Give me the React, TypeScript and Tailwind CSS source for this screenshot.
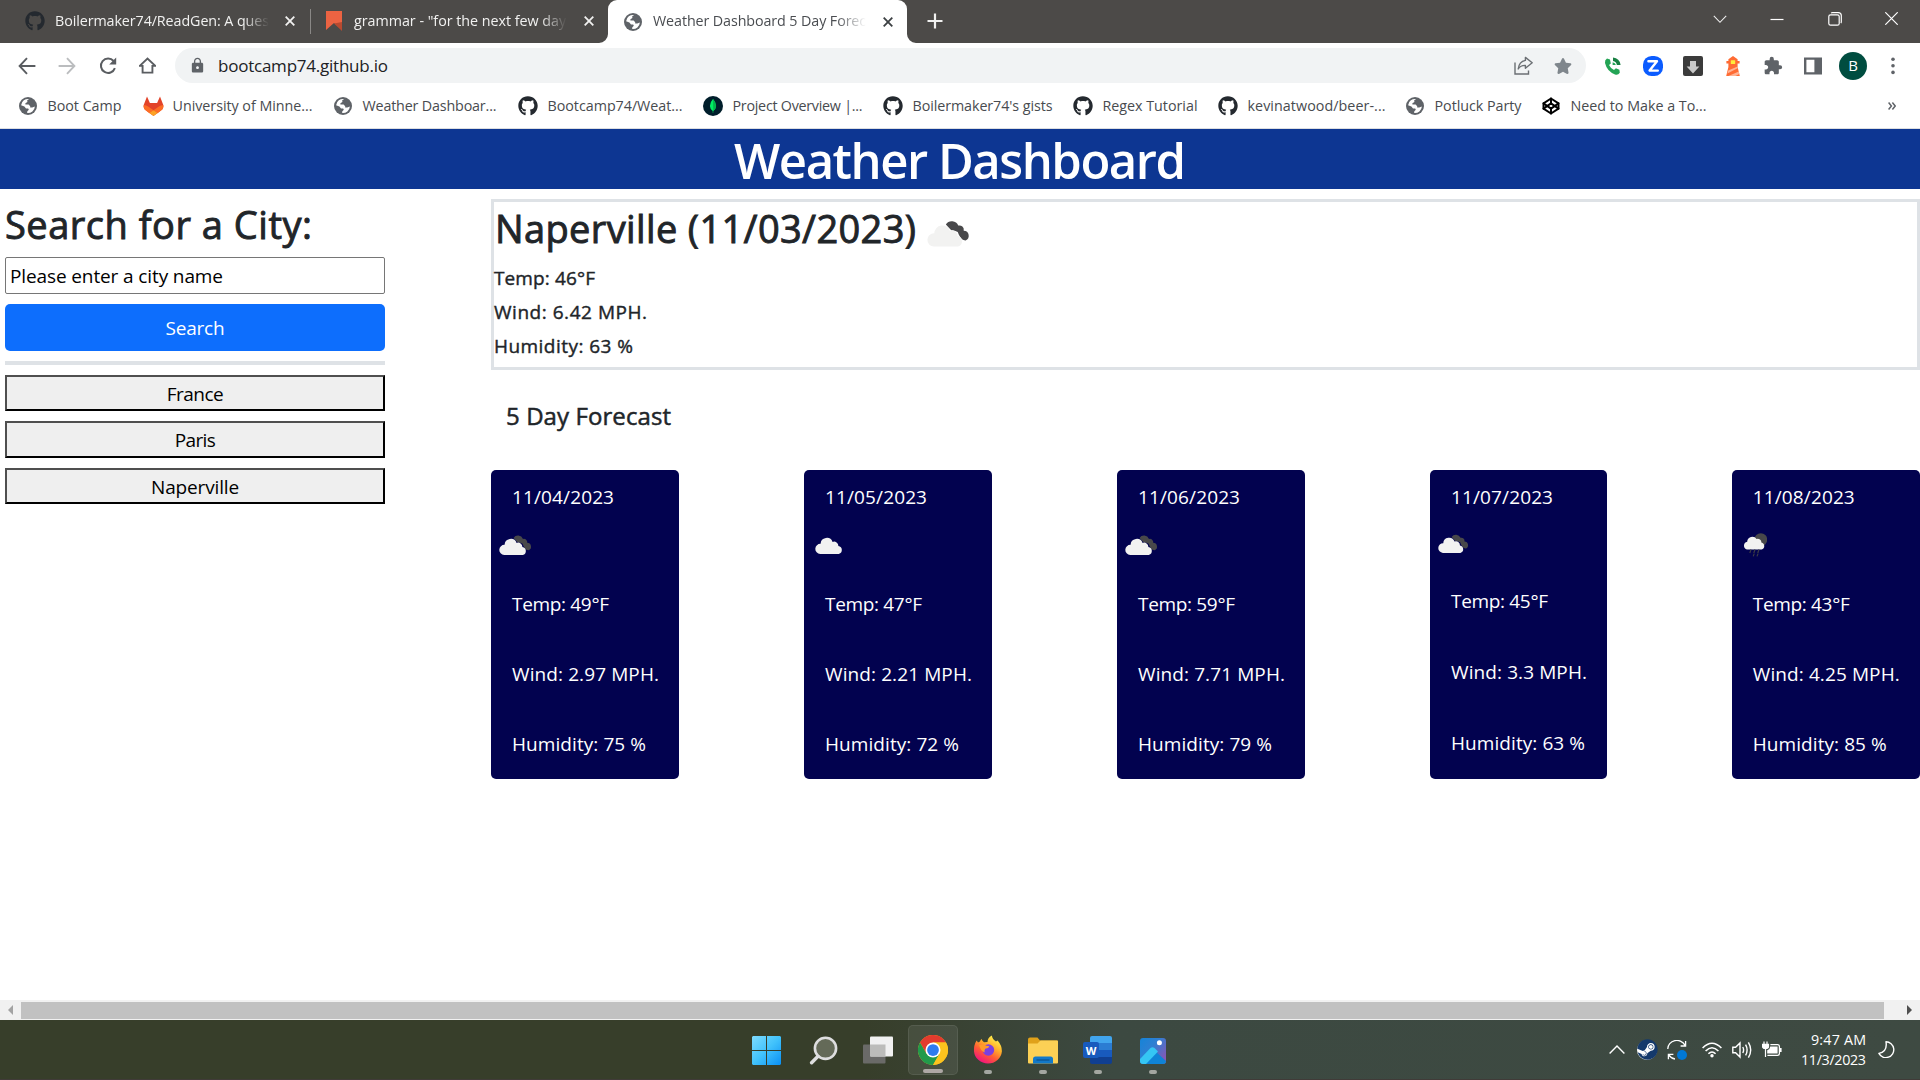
import React, { useLayoutEffect, useRef, useState } from "react";
import { FaGithub, FaSteam, FaStar } from "react-icons/fa";
import { MdExtension, MdLock } from "react-icons/md";
import { Codepen } from "lucide-react";

/** Single line of text whose tracking is adjusted so that it spans `w` pixels. */
function Fit({ w, className = "", children }: { w: number; className?: string; children: string }) {
  const ref = useRef<HTMLSpanElement>(null);
  const [spacing, setSpacing] = useState(0);
  useLayoutEffect(() => {
    const el = ref.current;
    if (!el) return;
    el.style.letterSpacing = "0px";
    const natural = el.getBoundingClientRect().width;
    const next = (w - natural) / Math.max(1, children.length - 1);
    el.style.letterSpacing = `${next}px`;
    setSpacing(next);
  }, [w, children]);
  return (
    <span className={`block shrink-0 whitespace-nowrap ${className}`} style={{ width: w }}>
      <span ref={ref} className="inline-block" style={{ letterSpacing: spacing }}>
        {children}
      </span>
    </span>
  );
}

function Globe() {
  return (
    <svg className="size-[18px] shrink-0" viewBox="0 0 18 18">
      <circle cx="9" cy="9" r="9" fill="#5f6368" />
      <path
        d="M10.2 2 L8.2 3.2 L8.4 5 L6.4 6.2 L6.4 7.6 L9.6 7.6 L11.2 9.2 L11.2 10.6 L13.2 10.6 L15.9 9.6 A7 7 0 0 1 8.2 16 L8.2 14.4 L9.8 12.8 L9.2 11.6 L7 11.4 L5.4 9.6 L2.1 8.2 A7 7 0 0 1 10.2 2Z"
        fill="#fff"
      />
      <path d="M10.3 2 A7.1 7.1 0 0 1 15.9 8.6 L13.8 8.8 L12.4 7 L9.6 6.6 L9 4.4Z" fill="#5f6368" />
    </svg>
  );
}

function Gitlab() {
  return (
    <svg className="h-[20px] w-[21px] shrink-0" viewBox="0 0 21 20">
      <path d="M4 0.6 L6.9 7 H14.1 L17 0.6 L20.3 9 Q21 12.4 18 14.6 L10.5 20 L3 14.6 Q0 12.4 0.7 9Z" fill="#e24329" />
      <path d="M20.2 9 Q17 9.4 14.4 11.4 L10.5 14.3 L14.6 17.2 L18 14.6 Q21 12.4 20.2 9Z M0.8 9 Q4 9.4 6.6 11.4 L10.5 14.3 L6.4 17.2 L3 14.6 Q0 12.4 0.8 9Z" fill="#fc6d26" />
      <path d="M10.5 14.3 L14.6 17.1 L10.5 20 L6.4 17.1Z" fill="#fca326" />
    </svg>
  );
}

function Mongo() {
  return (
    <svg className="size-[20px] shrink-0" viewBox="0 0 20 20">
      <circle cx="10" cy="10" r="10" fill="#001e2b" />
      <path d="M10 3 Q13.2 6.4 13.1 10 Q12.8 13.4 10.3 15 L10.2 17 H9.8 L9.7 15 Q7.1 13.4 6.9 10 Q6.8 6.4 10 3Z" fill="#00ed64" />
      <path d="M10 3 Q13.2 6.4 13.1 10 Q12.8 13.4 10.3 15Z" fill="#00b54c" />
    </svg>
  );
}

function Close({ className }: { className: string }) {
  return (
    <svg className={`size-[10px] shrink-0 ${className}`} viewBox="0 0 10 10" stroke="currentColor" strokeWidth="1.8">
      <path d="M0.7 0.7 L9.3 9.3 M9.3 0.7 L0.7 9.3" />
    </svg>
  );
}

function TabStrip() {
  return (
    <div className="flex h-[43px] bg-[#4c4a48] text-[14.3px] leading-[40px] text-[#f1f1f0]">
      <div className="flex h-[42px] w-[310px] items-center pl-[25px]">
        <FaGithub className="mr-[10px] size-[20px] shrink-0 text-[#24292f]" />
        <div className="w-[214px] overflow-hidden [mask-image:linear-gradient(to_right,#000_88%,transparent)]">
          <Fit w={219}>Boilermaker74/ReadGen: A quest</Fit>
        </div>
        <Close className="ml-[16px]" />
      </div>
      <div className="mt-[9px] h-[25px] w-px bg-[#8a8886]" />
      <div className="flex h-[42px] w-[297px] items-center pl-[15px]">
        <svg className="mr-[12px] h-[20px] w-[16px] shrink-0" viewBox="0 0 16 20">
          <path d="M0 0H16V19L8 12L0 19Z" fill="#ec6342" />
          <path d="M8 12.5L16 11V20Z" fill="#b84a30" />
        </svg>
        <div className="w-[215px] overflow-hidden [mask-image:linear-gradient(to_right,#000_87%,transparent_99%)]">
          <Fit w={219}>grammar - "for the next few days</Fit>
        </div>
        <Close className="ml-[15px]" />
      </div>
      <div className="relative flex w-[299px] items-center rounded-t-[9px] bg-white pl-[16px] text-[#4a4d51]">
        <svg className="absolute bottom-0 -left-[9px] size-[9px]" viewBox="0 0 9 9">
          <path d="M9 0V9H0A9 9 0 0 0 9 0Z" fill="#fff" />
        </svg>
        <svg className="absolute -right-[9px] bottom-0 size-[9px]" viewBox="0 0 9 9">
          <path d="M0 0V9H9A9 9 0 0 1 0 0Z" fill="#fff" />
        </svg>
        <Globe />
        <div className="mb-[2px] ml-[10px] w-[214px] overflow-hidden [mask-image:linear-gradient(to_right,#000_86%,transparent)]">
          <Fit w={221} className="pl-px">
            Weather Dashboard 5 Day Foreca
          </Fit>
        </div>
        <Close className="ml-[17px] text-[#3c4043]" />
      </div>
      <svg className="mt-[13px] ml-[20px] size-[16px]" viewBox="0 0 16 16" stroke="#f1f1f0" strokeWidth="2.2">
        <path d="M8 0.5V15.5M0.5 8H15.5" />
      </svg>
      <div className="ml-auto flex h-[37px] items-center gap-[43.5px] pr-[22px]">
        <svg className="size-[14px]" viewBox="0 0 14 14" fill="none" stroke="#eee" strokeWidth="1.1">
          <path d="M0.8 3.8L7 10.3L13.2 3.8" />
        </svg>
        <svg className="size-[14px]" viewBox="0 0 14 14" stroke="#fff" strokeWidth="1.2">
          <path d="M0.5 7.5H13.5" />
        </svg>
        <svg className="size-[14px]" viewBox="0 0 14 14" fill="none" stroke="#fff" strokeWidth="1.2">
          <rect x="0.8" y="2.8" width="10.4" height="10.4" rx="1.8" />
          <path d="M3 1Q3.6 0.7 4.5 0.7H10.2Q13.3 0.7 13.3 3.6V9.6Q13.3 10.6 12.9 11.2" />
        </svg>
        <svg className="size-[13px]" viewBox="0 0 13 13" stroke="#fff" strokeWidth="1.2">
          <path d="M0.3 0.3L12.7 12.7M12.7 0.3L0.3 12.7" />
        </svg>
      </div>
    </div>
  );
}

function Toolbar() {
  return (
    <div className="flex h-[44px] items-center bg-white pt-px pl-[18px]">
      <svg className="size-[18px]" viewBox="0 0 18 18" fill="none" stroke="#5a5d61" strokeWidth="1.9">
        <path d="M9 1.2L1.6 9L9 16.8M1.6 9H17.4" />
      </svg>
      <svg className="ml-[22px] size-[18px]" viewBox="0 0 18 18" fill="none" stroke="#bbbdbf" strokeWidth="1.9">
        <path d="M9 1.2L16.4 9L9 16.8M16.4 9H0.6" />
      </svg>
      <svg className="ml-[23px] size-[18px]" viewBox="0 0 18 18">
        <path d="M15.9 11.2A7.2 7.2 0 1 1 14.6 4" fill="none" stroke="#5a5d61" strokeWidth="2" />
        <path d="M17.2 0.6V7.6H10.2Z" fill="#5a5d61" />
      </svg>
      <svg className="ml-[22px] size-[17px]" viewBox="0 0 18 18" fill="none" stroke="#5a5d61" strokeWidth="2">
        <path d="M0.8 9.4L9 1.6L17.2 9.4H14.2V16.6H3.8V9.4Z" />
      </svg>
      <div className="ml-[19px] flex h-[35px] w-[1411px] items-center rounded-full bg-[#f1f3f4] pr-[14px] pl-[14px]">
        <MdLock className="size-[17px] text-[#5f6368]" />
        <Fit w={170} className="ml-[12px] text-[17px] text-[#202124]">
          bootcamp74.github.io
        </Fit>
        <svg className="mr-[21px] ml-auto size-[19px]" viewBox="0 0 19 19" fill="none" stroke="#6b6f73" strokeWidth="1.4">
          <path d="M1 6.5V18H14.5V14.5" />
          <path d="M11.4 1.4L18.2 6.8L11.4 12.2V9.4Q6.6 9.2 4.2 13Q5 5.6 11.4 4.4Z" strokeLinejoin="round" />
        </svg>
        <FaStar className="size-[18px] text-[#7f868c]" />
      </div>
      <div className="ml-[17px] flex items-center gap-[20px]">
        <svg className="size-[20px]" viewBox="0 0 20 20" fill="#23a455">
          <path d="M4 2.6L7 3.6L7.8 7.4L6 9Q7.8 12.6 11 14L12.9 12.3L16.4 13.7L16.8 16.8Q15 19.4 12 18.4Q4 15.4 2 7Q1.6 3.9 4 2.6Z" />
          <path d="M10 1.6Q16.6 2.2 17.6 9H13.9Q13.3 5.6 10 5.1Z" fill="#188043" />
          <path d="M9.6 6.2Q12.3 6.6 12.9 9H9.6Z" />
        </svg>
        <svg className="size-[20px]" viewBox="0 0 20 20">
          <rect width="20" height="20" rx="8.6" fill="#0b5cff" />
          <path d="M5.4 5.2H14L6.6 14.6H14.8" fill="none" stroke="#fff" strokeWidth="2.4" strokeLinejoin="round" strokeLinecap="round" />
        </svg>
        <svg className="size-[20px]" viewBox="0 0 20 20">
          <rect width="20" height="20" rx="2" fill="#3b3b3b" />
          <path d="M7 5H13V10.5H16.4L10 17.4L3.6 10.5H7Z" fill="#c9c9c9" />
        </svg>
        <svg className="size-[20px]" viewBox="0 0 20 20">
          <path d="M10 0L14.6 3.2V5H16.6V7.6H14.6V11L16.8 20H3.2L5.4 11V7.6H3.4V5H5.4V3.2Z" fill="#ff6b33" />
          <rect x="7.8" y="4.2" width="4.4" height="3.8" rx="0.6" fill="#ffeb3b" />
          <path d="M5.2 14.4L14.6 10.4L15 12L4.4 17.4ZM5.4 20L15.8 15.6L16.3 18L12.4 20Z" fill="#ffb394" />
        </svg>
        <MdExtension className="size-[20px] text-[#5f6368]" />
        <svg className="size-[20px]" viewBox="0 0 20 20">
          <path d="M1 1.4H19V18.6H1ZM3.4 3.8V16.2H11.4V3.8Z" fill="#5f6368" fillRule="evenodd" />
        </svg>
        <div className="-ml-[4px] flex size-[28px] items-center justify-center rounded-full bg-[#004d40] text-[15px] leading-none text-white">B</div>
        <svg className="-ml-[0px] h-[18px] w-[4px] translate-x-[4px]" viewBox="0 0 4 18" fill="#5f6368">
          <circle cx="2" cy="2.2" r="1.8" />
          <circle cx="2" cy="8.8" r="1.8" />
          <circle cx="2" cy="15.4" r="1.8" />
        </svg>
      </div>
    </div>
  );
}

const cat = <FaGithub className="size-[20px] text-[#24292f]" />;
const bookmarks: { icon: React.ReactNode; label: string; w: number; cell: number }[] = [
  { icon: <Globe />, label: "Boot Camp", w: 74, cell: 125 },
  { icon: <Gitlab />, label: "University of Minne...", w: 140, cell: 190 },
  { icon: <Globe />, label: "Weather Dashboar...", w: 134, cell: 185 },
  { icon: cat, label: "Bootcamp74/Weat...", w: 135, cell: 185 },
  { icon: <Mongo />, label: "Project Overview |...", w: 130, cell: 180 },
  { icon: cat, label: "Boilermaker74's gists", w: 140, cell: 190 },
  { icon: cat, label: "Regex Tutorial", w: 95, cell: 145 },
  { icon: cat, label: "kevinatwood/beer-...", w: 138, cell: 187 },
  { icon: <Globe />, label: "Potluck Party", w: 87, cell: 136 },
  { icon: <Codepen className="size-[18px] text-black" strokeWidth={2.6} />, label: "Need to Make a To...", w: 136, cell: 200 },
];

function Bookmarks() {
  return (
    <div className="flex h-[42px] items-center border-b border-[#dcdee1] bg-white pb-[4px] pl-[17px] text-[14.3px] text-[#484b4f]">
      {bookmarks.map((b) => (
        <div key={b.label} className="flex shrink-0 items-center" style={{ width: b.cell }}>
          <span className="mr-[8.5px] flex w-[22px] justify-center">{b.icon}</span>
          <Fit w={b.w}>{b.label}</Fit>
        </div>
      ))}
      <svg className="mr-[24px] ml-auto size-[8px]" viewBox="0 0 8 8" fill="none" stroke="#5f6368" strokeWidth="1.5">
        <path d="M0.6 0.6L3.4 4L0.6 7.4M4.4 0.6L7.2 4L4.4 7.4" />
      </svg>
    </div>
  );
}

function Cloud({ kind, className }: { kind: "broken" | "plain" | "rain"; className: string }) {
  if (kind === "rain") {
    return (
      <svg className={className} viewBox="0 0 24 24">
        <circle cx="17.8" cy="6.6" r="6.4" fill="#48484a" />
        <path d="M4 16.6A4 4 0 0 1 4.2 8.8A5.2 5.2 0 0 1 13.6 6A3.6 3.6 0 0 1 18.4 9.6A3.6 3.6 0 0 1 18.6 16.6Z" fill="#f2f2f1" />
        <path d="M8 16.5L6.8 20M12 16.5L10.8 20M16 16.5L14.8 20M11.2 20.6L10.2 23.4M15 20.6L14 23.4" stroke="#3c3c45" strokeWidth="1.2" />
      </svg>
    );
  }
  return (
    <svg className={className} viewBox="0 0 33 20">
      {kind === "broken" && (
        <path
          d="M14.5 3A5.4 5.4 0 0 1 24 3.9A3.4 3.4 0 0 1 28.2 7.8A3.9 3.9 0 0 1 29.6 15.3Q27.4 15.4 26 13.5Q24.4 11.4 23.6 8.8Q20.6 7.2 18.6 7.6Z"
          fill="#48484a"
        />
      )}
      <path
        d="M5.2 20A5.1 5.1 0 0 1 5.6 9.8A6.2 6.2 0 0 1 17.6 7.9A4.3 4.3 0 0 1 23.4 12A4.1 4.1 0 0 1 23.8 20Z"
        fill="#f2f2f1"
      />
    </svg>
  );
}

function Sidebar() {
  return (
    <aside className="flex w-[385px] shrink-0 flex-col pt-[8px] pl-[5px]">
      <h2 className="text-[38px] leading-[54px] [-webkit-text-stroke:0.9px_#212529]">
        <Fit w={307}>Search for a City:</Fit>
      </h2>
      <div className="mt-[6px] flex h-[37px] items-center rounded-[2px] border border-[#767676] bg-white pt-px pl-[4px] text-[19px] text-black">
        <Fit w={213}>Please enter a city name</Fit>
      </div>
      <button className="mt-[10px] flex h-[47px] items-center justify-center rounded-[5px] bg-[#0d6efd] pt-px text-[19px] text-white">
        <Fit w={59}>Search</Fit>
      </button>
      <div className="mt-[10px] h-[4px] bg-[#dee2e6]" />
      <div className="mt-[10px] flex flex-col gap-[10px]">
        {[
          { name: "France", w: 57 },
          { name: "Paris", w: 41 },
          { name: "Naperville", w: 88 },
        ].map((c) => (
          <button
            key={c.name}
            className="flex h-[36.4px] items-center justify-center border-2 border-t-[#4f4f4f] border-r-black border-b-black border-l-[#4f4f4f] bg-[#efefef] pt-[2px] text-[19px] text-black"
          >
            <Fit w={c.w}>{c.name}</Fit>
          </button>
        ))}
      </div>
    </aside>
  );
}

type Day = {
  date: string;
  temp: string;
  wind: string;
  windW: number;
  hum: string;
  kind: "broken" | "plain" | "rain";
  box: string;
  iconRow: string;
  icon: string;
};

const days: Day[] = [
  { date: "11/04/2023", temp: "49", wind: "2.97", windW: 147, hum: "75", kind: "broken", box: "w-[188.25px]", iconRow: "h-[45px] pt-[11px] pl-[8px]", icon: "w-[33px] h-[20px]" },
  { date: "11/05/2023", temp: "47", wind: "2.21", windW: 147, hum: "72", kind: "plain", box: "w-[188.25px]", iconRow: "h-[45px] pt-[10px] pl-[11px]", icon: "w-[33px] h-[20px]" },
  { date: "11/06/2023", temp: "59", wind: "7.71", windW: 147, hum: "79", kind: "broken", box: "w-[188.25px]", iconRow: "h-[45px] pt-[11px] pl-[8px]", icon: "w-[33px] h-[20px]" },
  { date: "11/07/2023", temp: "45", wind: "3.3", windW: 136, hum: "63", kind: "broken", box: "w-[177px]", iconRow: "h-[42px] pt-[10px] pl-[8px]", icon: "w-[31px] h-[19px]" },
  { date: "11/08/2023", temp: "43", wind: "4.25", windW: 147, hum: "85", kind: "rain", box: "w-[188.25px]", iconRow: "h-[45px] pt-[9px] pl-[11px]", icon: "w-[24px] h-[24px]" },
];

function DayCard({ d }: { d: Day }) {
  return (
    <article className={`flex h-[309px] flex-col rounded-[5px] bg-[#02024f] text-[19px] text-white ${d.box}`}>
      <div className="flex h-[54px] shrink-0 items-center pl-[21px]">
        <Fit w={102}>{d.date}</Fit>
      </div>
      <div className={`shrink-0 ${d.iconRow}`}>
        <Cloud kind={d.kind} className={d.icon} />
      </div>
      <div className="grid flex-1 grid-rows-3 items-center pl-[21px]">
        <Fit w={97}>{`Temp: ${d.temp}°F`}</Fit>
        <Fit w={d.windW}>{`Wind: ${d.wind} MPH.`}</Fit>
        <Fit w={134}>{`Humidity: ${d.hum} %`}</Fit>
      </div>
    </article>
  );
}

function Forecast() {
  return (
    <main className="ml-[106px] flex flex-1 flex-col pt-[10px]">
      <section className="h-[171px] border-[3px] border-[#dee2e6]">
        <div className="flex h-[59px] items-center text-[38px] leading-[54px] [-webkit-text-stroke:0.9px_#212529]">
          <Fit w={421} className="mb-[8px] ml-px">
            Naperville (11/03/2023)
          </Fit>
          <Cloud kind="broken" className="mt-[4px] ml-[11px] h-[27px] w-[43px] [-webkit-text-stroke:0]" />
        </div>
        <div className="flex flex-col text-[19px] leading-[34px] [-webkit-text-stroke:0.4px_#212529]">
          <Fit w={101}>Temp: 46°F</Fit>
          <Fit w={153}>Wind: 6.42 MPH.</Fit>
          <Fit w={139}>Humidity: 63 %</Fit>
        </div>
      </section>
      <h3 className="mt-[27px] ml-[15px] text-[24px] leading-[38px] [-webkit-text-stroke:0.5px_#212529]">
        <Fit w={165}>5 Day Forecast</Fit>
      </h3>
      <div className="mt-[35px] flex justify-between">
        {days.map((d) => (
          <DayCard key={d.date} d={d} />
        ))}
      </div>
    </main>
  );
}

function ScrollBar() {
  return (
    <div className="flex h-[20px] shrink-0 items-center justify-between bg-[#f1f1f1] px-[8px]">
      <svg className="h-[10px] w-[5px]" viewBox="0 0 5 10">
        <path d="M5 0V10L0 5Z" fill="#a3a3a3" />
      </svg>
      <div className="mr-[23px] ml-[8px] h-[17px] flex-1 bg-[#c1c1c1]" />
      <svg className="h-[10px] w-[5px]" viewBox="0 0 5 10">
        <path d="M0 0V10L5 5Z" fill="#505050" />
      </svg>
    </div>
  );
}

function WindowsLogo() {
  return (
    <svg className="mr-[3px] size-[29px]" viewBox="0 0 29 29">
      <defs>
        <linearGradient id="win" x1="0" y1="0" x2="1" y2="1">
          <stop offset="0" stopColor="#7fdcff" />
          <stop offset="0.5" stopColor="#41c2fb" />
          <stop offset="1" stopColor="#0a8ff5" />
        </linearGradient>
      </defs>
      <path d="M1 0H14V14H0V1ZM15 0H28L29 1V14H15ZM0 15H14V29H1L0 28ZM15 15H29V28L28 29H15Z" fill="url(#win)" />
    </svg>
  );
}

function SearchIcon() {
  return (
    <svg className="size-[29px]" viewBox="0 0 29 29" fill="none" stroke="#dededf" strokeLinecap="round">
      <circle cx="16.5" cy="12.3" r="10.6" strokeWidth="2.6" fill="#646a58" />
      <path d="M9 20.2L2.6 26.8" strokeWidth="3.4" />
    </svg>
  );
}

function TaskView() {
  return (
    <svg className="h-[28px] w-[30px]" viewBox="0 0 30 28">
      <rect x="0" y="8.5" width="22.5" height="19" rx="1" fill="#6a6a68" />
      <rect x="7" y="0.5" width="23" height="20" rx="1" fill="#f1f1f1" />
      <path d="M7 8.5H22.5V20.5H8Q7 20.5 7 19.5Z" fill="#bcbcba" />
    </svg>
  );
}

function ChromeIcon() {
  return (
    <svg className="size-[30px]" viewBox="0 0 48 48">
      <circle cx="24" cy="24" r="24" fill="#fbc116" />
      <path d="M3.2 12A24 24 0 0 1 44.8 12H24L13.6 30Z" fill="#e33b2e" />
      <path d="M3.2 12A24 24 0 0 0 24 48L34.4 30H13.6Z" fill="#229a4b" />
      <path d="M24 12H44.8A24 24 0 0 1 24 48L34.4 30Z" fill="#fcc31e" />
      <circle cx="24" cy="24" r="12" fill="#fff" />
      <circle cx="24" cy="24" r="9.4" fill="#2f7bef" />
    </svg>
  );
}

function FirefoxIcon() {
  return (
    <svg className="size-[30px]" viewBox="0 0 30 30">
      <defs>
        <linearGradient id="fox" x1="0.8" y1="0.05" x2="0.25" y2="0.95">
          <stop offset="0" stopColor="#fff44f" />
          <stop offset="0.35" stopColor="#ffb02a" />
          <stop offset="0.65" stopColor="#ff5a35" />
          <stop offset="1" stopColor="#f2127f" />
        </linearGradient>
      </defs>
      <path
        d="M3.6 5.4Q4.4 6.4 5 7.6L7 6.4Q7.4 4.8 8.6 4Q9 6 11 7.2L14.5 7Q14.5 3 18.8 0.6Q19.4 4.4 23 6.6L24.6 5.4Q29 10.4 28.9 16.2A14 13.4 0 0 1 1 16.4Q0.6 10 3.6 5.4Z"
        fill="url(#fox)"
      />
      <circle cx="15.4" cy="15" r="5.8" fill="#7b3fe0" />
      <path d="M6.2 10Q10 8.6 13.4 10.8L16.4 11.2Q15.4 13.6 12.6 13.4Q11 14.6 11.6 17.4Q7 15.4 6.2 10Z" fill="#ff9a2a" />
    </svg>
  );
}

function FolderIcon() {
  return (
    <svg className="mt-px h-[27px] w-[30px]" viewBox="0 0 30 27">
      <path d="M0 2.5Q0 0.5 2 0.5H9.5L12 3.5H29Q30 3.5 30 4.5V14H0Z" fill="#e0a11a" />
      <path d="M0 6.5H9.5L12.5 3.5H29Q30 3.5 30 4.5V25.5Q30 26.5 29 26.5H1Q0 26.5 0 25.5Z" fill="#fcd055" />
      <path d="M5 26.5V22Q5 19.5 7.5 19.5H22.5Q25 19.5 25 22V26.5Z" fill="#1279c9" />
      <path d="M8.5 23H21.5" stroke="#0c4f8c" strokeWidth="1.2" />
    </svg>
  );
}

function WordIcon() {
  return (
    <div className="relative h-[28px] w-[30px]">
      <div className="ml-[7px] flex h-[28px] w-[22px] flex-col overflow-hidden rounded-[2px]">
        <div className="flex-1 bg-[#41a5ee]" />
        <div className="flex-1 bg-[#2b7cd3]" />
        <div className="flex-1 bg-[#185abd]" />
        <div className="flex-1 bg-[#103f91]" />
      </div>
      <div className="absolute top-[6px] left-0 flex size-[16px] items-center justify-center rounded-[2px] bg-[#185abd] text-[11px] leading-none font-bold text-white">
        W
      </div>
    </div>
  );
}

function PhotosIcon() {
  return (
    <svg className="mt-px size-[26px]" viewBox="0 0 26 26">
      <defs>
        <linearGradient id="sky" x1="0" y1="0" x2="1" y2="0.8">
          <stop offset="0" stopColor="#1584d8" />
          <stop offset="0.45" stopColor="#2f7fd2" />
          <stop offset="1" stopColor="#8a55b4" />
        </linearGradient>
        <clipPath id="frame">
          <rect width="26" height="26" rx="3" />
        </clipPath>
      </defs>
      <g clipPath="url(#frame)">
        <rect width="26" height="26" fill="url(#sky)" />
        <path d="M3 26L14 12L26 23V26Z" fill="#0f83d6" />
        <path d="M0 21L10.5 10Q12.5 8.4 14.5 10L18 13.4L6 26H0Z" fill="#35c6f4" />
      </g>
      <circle cx="19.4" cy="4.8" r="2.5" fill="#fff" />
    </svg>
  );
}

const apps: { id: string; icon: React.ReactNode; mark: string; cell: string }[] = [
  { id: "start", icon: <WindowsLogo />, mark: "hidden", cell: "" },
  { id: "search", icon: <SearchIcon />, mark: "hidden", cell: "" },
  { id: "views", icon: <TaskView />, mark: "hidden", cell: "" },
  { id: "chrome", icon: <ChromeIcon />, mark: "w-[20px] bg-[#aea8a5]", cell: "bg-white/8 border border-white/8" },
  { id: "firefox", icon: <FirefoxIcon />, mark: "w-[8px] bg-[#a3a7a1]", cell: "" },
  { id: "files", icon: <FolderIcon />, mark: "w-[8px] bg-[#a3a7a1]", cell: "" },
  { id: "word", icon: <WordIcon />, mark: "w-[8px] bg-[#a3a7a1]", cell: "" },
  { id: "photos", icon: <PhotosIcon />, mark: "w-[8px] bg-[#a3a7a1]", cell: "" },
];

function Taskbar() {
  return (
    <footer className="flex h-[60px] shrink-0 items-center border-b border-[#403b38] bg-linear-to-r from-[#373e2a] from-45% via-[#3c4941] via-58% to-[#3e4a42] pl-[743px] text-white">
      <div className="mt-px flex gap-[5px]">
        {apps.map((a) => (
          <div key={a.id} className={`relative flex size-[50px] items-center justify-center rounded-[5px] ${a.cell}`}>
            {a.icon}
            <div className={`absolute bottom-px h-[4px] rounded-full ${a.mark}`} />
          </div>
        ))}
      </div>
      <div className="ml-auto flex items-center pr-[25px]">
        <svg className="h-[9px] w-[16px]" viewBox="0 0 16 9" fill="none" stroke="#fff" strokeWidth="1.4">
          <path d="M0.6 8.4L8 1L15.4 8.4" />
        </svg>
        <div className="ml-[12px] flex size-[20px] items-center justify-center rounded-full bg-white">
          <FaSteam className="size-[21px] shrink-0 text-[#14396b]" />
        </div>
        <svg className="ml-[10px] size-[20px]" viewBox="0 0 20 20" fill="none" stroke="#fff" strokeWidth="1.3">
          <path d="M0.8 9A9 8.4 0 0 1 18 5.4M18.6 1V6H13.6M8 19Q4 18.4 1.6 14.6M1.4 19.2V14.4H6.4" />
          <circle cx="15" cy="15" r="5" fill="#0078d7" stroke="none" />
        </svg>
        <svg className="ml-[15px] h-[16px] w-[20px]" viewBox="0 0 20 16" fill="none" stroke="#fff" strokeWidth="1.6">
          <path d="M0.6 6Q10 -3.6 19.4 6M3.6 9Q10 2.4 16.4 9M6.4 11.8Q10 8.2 13.6 11.8" />
          <circle cx="10" cy="13.8" r="1.7" fill="#fff" stroke="none" />
        </svg>
        <svg className="ml-[10px] h-[18px] w-[20px]" viewBox="0 0 20 18" fill="none" stroke="#fff" strokeWidth="1.4">
          <path d="M0.8 6.2H3.6L8 2V16L3.6 11.8H0.8ZM10.8 6Q12.4 9 10.8 12M13.6 3.6Q16.6 9 13.6 14.4M16.4 1.4Q21 9 16.4 16.6" />
        </svg>
        <svg className="ml-[10px] h-[17px] w-[20px]" viewBox="0 0 20 17">
          <path d="M2 0.6V3M5 0.6V3M0.5 3.4H6.5V5.4Q6.5 7.4 3.5 7.6Q0.5 7.4 0.5 5.4ZM3.5 7V16" fill="#fff" stroke="#fff" strokeWidth="1.2" />
          <path d="M8.4 3.6H15.6Q17.4 3.6 17.4 5.4V12.6Q17.4 14.4 15.6 14.4H5.4" fill="none" stroke="#fff" strokeWidth="1.3" />
          <path d="M8.2 5.4H15.6V12.6H5.2V9.2Q8.2 8 8.2 5.4ZM18 7H19.6V11H18Z" fill="#fff" />
        </svg>
        <div className="ml-[18px] flex w-[66px] flex-col items-end text-[14.3px] leading-[20px]">
          <Fit w={55}>9:47 AM</Fit>
          <Fit w={65}>11/3/2023</Fit>
        </div>
        <svg className="ml-[12px] size-[17px]" viewBox="0 0 17 17" fill="none" stroke="#fff" strokeWidth="1.4">
          <path d="M8 0.8A7.9 7.9 0 1 1 0.9 12.4Q9.6 10.8 8 0.8Z" strokeLinejoin="round" />
        </svg>
      </div>
    </footer>
  );
}

export default function App() {
  return (
    <div className="flex h-[1080px] w-[1920px] flex-col overflow-hidden bg-white font-['Open_Sans','Noto_Sans',sans-serif] text-[#212529]">
      <TabStrip />
      <Toolbar />
      <Bookmarks />
      <header className="flex h-[60px] shrink-0 items-center justify-center bg-[#0d3692] text-[49px] leading-none font-semibold text-white">
        <h1 className="pt-[2px]">
          <Fit w={452}>Weather Dashboard</Fit>
        </h1>
      </header>
      <div className="flex min-h-0 flex-1">
        <Sidebar />
        <Forecast />
      </div>
      <ScrollBar />
      <Taskbar />
    </div>
  );
}
